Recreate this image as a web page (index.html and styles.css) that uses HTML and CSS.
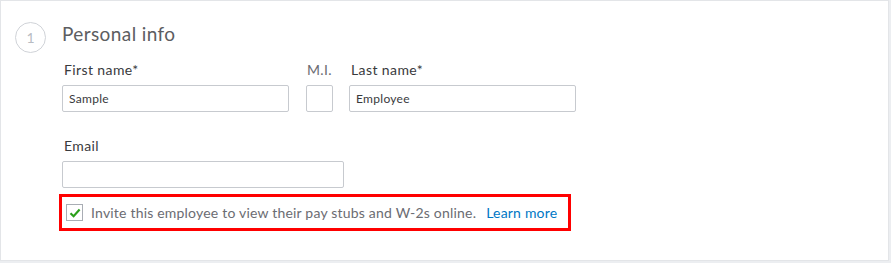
FILE: index.html
```html
<!DOCTYPE html>
<html>
<head>
  <title>Personal info</title>
  <link rel="stylesheet" href="styles.css">
</head>
<body>

<div class="card">
  <div class="step-head">
    <div class="step-num">1</div>
    <div class="step-title">Personal info</div>
  </div>

  <div class="fields">
    <div class="row">
      <div class="field">
        <label class="field-label">First name*</label>
        <input class="text-input name-input" type="text" value="Sample">
      </div>
      <div class="field field-mi">
        <label class="field-label">M.I.</label>
        <input class="text-input mi-input" type="text" value="">
      </div>
      <div class="field">
        <label class="field-label">Last name*</label>
        <input class="text-input name-input" type="text" value="Employee">
      </div>
    </div>

    <div class="row row-email">
      <div class="field">
        <label class="field-label">Email</label>
        <input class="text-input email-input" type="text" value="">
      </div>
    </div>

    <div class="invite">
      <span class="check-box">
        <svg width="12" height="10" viewBox="0 0 12 10">
          <path d="M1.5 5.2 L4.6 8.2 L10.6 1.6" fill="none" stroke="#2ca01c" stroke-width="2.2"/>
        </svg>
      </span>
      <span class="invite-text">Invite this employee to view their pay stubs and W-2s online.</span>
      <a class="learn-more" href="#">Learn more</a>
    </div>
  </div>
</div>

</body>
</html>
```

FILE: styles.css
```css
body {
  margin: 0;
  background-color: #eceef1;
  font-family: Lato, "Open Sans", sans-serif;
  color: #393a3d;
}
.card {
  box-sizing: border-box;
  width: 889px;
  height: 261px;
  background: #fff;
  border: 1px solid #e3e5e8;
  padding: 21px 14px;
}
.step-head {
  display: flex;
  gap: 16px;
}
.step-num {
  box-sizing: border-box;
  width: 31px;
  height: 31px;
  border: 1px solid #d0d3d8;
  border-radius: 50%;
  color: #b8bcc3;
  font-size: 14px;
  display: flex;
  align-items: center;
  justify-content: center;
}
.step-title {
  font-size: 19px;
  line-height: 22px;
  letter-spacing: 0.4px;
  color: #5c5d61;
  margin-top: 1px;
}

.fields {
  margin-left: 47px;
  margin-top: 7px;
}
.row {
  display: flex;
}
.field {
  display: flex;
  flex-direction: column;
}
.field-mi {
  margin: 0 16px 0 17px;
}
.field-label {
  font-size: 14px;
  line-height: 20px;
  letter-spacing: 0.4px;
  padding-left: 2px;
  margin-bottom: 5px;
}
.field-mi .field-label {
  text-align: center;
  padding-left: 0;
  color: #6b6c72;
}
.text-input {
  box-sizing: border-box;
  height: 27px;
  border: 1px solid #c7cacf;
  border-radius: 2px;
  padding: 0 6px;
  font-family: Lato, "Open Sans", sans-serif;
  font-size: 12px;
  letter-spacing: 0.3px;
  color: #393a3d;
  outline: none;
}
.name-input {
  width: 227px;
}
.mi-input {
  width: 27px;
}
.row-email {
  margin-top: 24px;
}
.email-input {
  width: 282px;
}

.invite {
  display: flex;
  align-items: center;
  box-sizing: border-box;
  width: 512px;
  height: 37px;
  margin-left: -3px;
  margin-top: 6px;
  border: 3px solid #ff0000;
  padding-left: 4px;
  font-size: 14px;
  letter-spacing: 0.2px;
}
.check-box {
  box-sizing: border-box;
  width: 17px;
  height: 17px;
  border: 1px solid #a9adb4;
  display: flex;
  align-items: center;
  justify-content: center;
  margin-right: 8px;
}
.invite-text {
  color: #6b6c72;
}
.learn-more {
  color: #0077c5;
  text-decoration: none;
  margin-left: 10px;
}
```
